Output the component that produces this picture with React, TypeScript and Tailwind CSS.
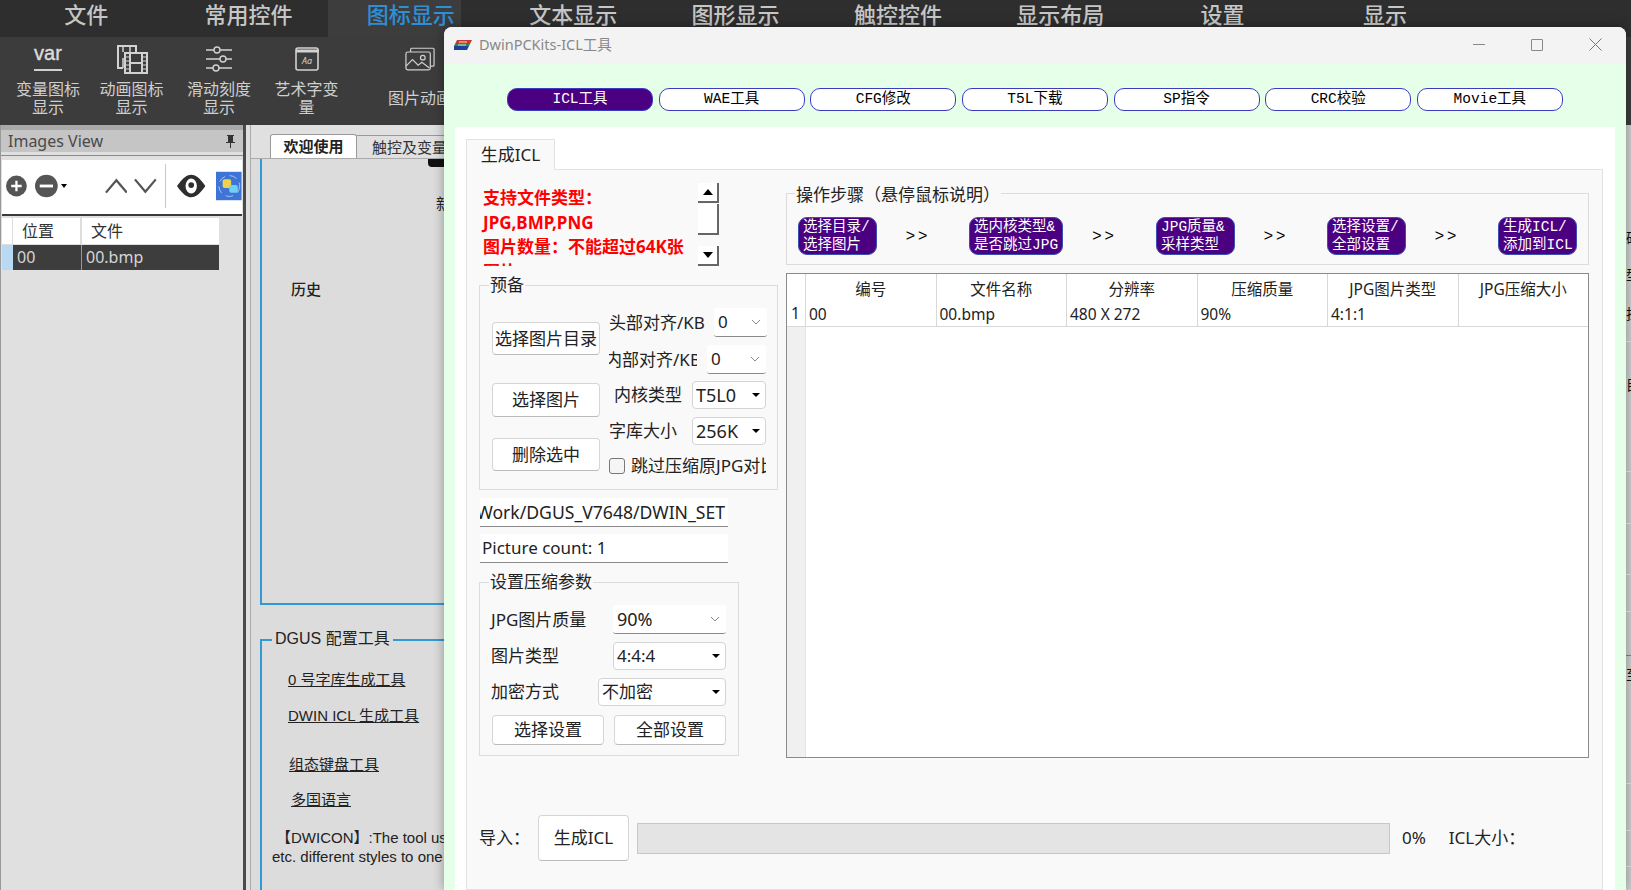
import React from 'react';

const UI = 'font-["Noto_Sans","Noto_Sans_CJK_SC",sans-serif]';
const MONO = 'font-["Liberation_Mono","Noto_Sans_CJK_SC",monospace]';
const ARIAL = 'font-["Liberation_Sans","Noto_Sans_CJK_SC",sans-serif]';

const topTabs = ['文件', '常用控件', '图标显示', '文本显示', '图形显示', '触控控件', '显示布局', '设置', '显示'];
const pills = ['ICL工具', 'WAE工具', 'CFG修改', 'T5L下载', 'SP指令', 'CRC校验', 'Movie工具'];
const columns = ['编号', '文件名称', '分辨率', '压缩质量', 'JPG图片类型', 'JPG压缩大小'];
const cells = ['00', '00.bmp', '480 X 272', '90%', '4:1:1', ''];

// what peeks out to the right of the floating window, y is from the top of the strip
const sideMarks: { y: number; h: number; text?: string; color?: string }[] = [
  { y: 106, h: 14, text: '硬' },
  { y: 143, h: 14, text: '型' },
  { y: 182, h: 14, text: '挂' },
  { y: 216, h: 1, color: '#e8e8e8' },
  { y: 253, h: 14, text: '目' },
  { y: 346, h: 1, color: '#e8e8e8' },
  { y: 398, h: 1, color: '#e8e8e8' },
  { y: 449, h: 1, color: '#e8e8e8' },
  { y: 486, h: 1, color: '#e8e8e8' },
  { y: 530, h: 1, color: '#2f9ad6' },
  { y: 543, h: 14, text: '至' },
  { y: 658, h: 1, color: '#e8e8e8' },
  { y: 705, h: 1, color: '#e8e8e8' },
  { y: 741, h: 1, color: '#e8e8e8' },
];

function VarIcon() {
  return (
    <div className="flex flex-col items-center w-[30px] h-[34px]">
      <span className={`${ARIAL} text-[20px] leading-[22px] font-normal text-[#dcdcdc] [-webkit-text-stroke:0.4px_#dcdcdc]`}>var</span>
      <div className="w-[28px] h-[2px] bg-[#d0d0d0] mt-[5px]" />
    </div>
  );
}

function FilmIcon() {
  return (
    <svg width="32" height="30" viewBox="0 0 32 30" fill="none" stroke="#d2d2d2" strokeWidth="2">
      <path d="M20 8V2H2v22h5" />
      <path d="M7 2v6M7 14v10M14 2v6" strokeWidth="1.5" />
      <rect x="9" y="9" width="22" height="20" />
      <path d="M14 9v20M26 9v20M14 19h12" />
      <path d="M9 13h5M9 17h5M9 21h5M9 25h5M26 13h5M26 17h5M26 21h5M26 25h5" strokeWidth="1.2" />
    </svg>
  );
}

function SlidersIcon() {
  return (
    <svg width="28" height="26" viewBox="0 0 28 26" fill="none" stroke="#d2d2d2" strokeWidth="1.4">
      <path d="M1 4h8M15 4h12M1 13h14M21 13h6M1 22h7M14 22h13" />
      <circle cx="12" cy="4" r="3" />
      <circle cx="18" cy="13" r="3" />
      <circle cx="11" cy="22" r="3" />
    </svg>
  );
}

function ArtIcon() {
  return (
    <svg width="24" height="24" viewBox="0 0 24 24" fill="none">
      <rect x="1" y="1" width="22" height="22" rx="2" stroke="#d2d2d2" strokeWidth="1.6" />
      <path d="M1 4h23" stroke="#d2d2d2" strokeWidth="3" />
      <text x="12" y="17" textAnchor="middle" fontSize="9" fontStyle="italic" fill="#d2d2d2">Aa</text>
    </svg>
  );
}

function ImagesIcon() {
  return (
    <svg width="30" height="25" viewBox="0 0 32 26" fill="none" stroke="#cfcfcf" strokeWidth="1.3">
      <path d="M6 5V2a1 1 0 0 1 1-1h23a1 1 0 0 1 1 1v17a1 1 0 0 1-1 1h-3" />
      <rect x="1" y="5" width="26" height="19" rx="2" />
      <path d="M1 20l7-7 6 6 4-3 8 6" />
      <circle cx="19" cy="11" r="2.5" />
    </svg>
  );
}

function RibbonItem({ icon, lines, w, labelTop }: { icon: React.ReactNode; lines: string[]; w: string; labelTop: string }) {
  return (
    <div className={`${w} shrink-0 flex flex-col items-center`}>
      <div className="h-[30px] flex items-center justify-center">{icon}</div>
      <div className={`${labelTop} text-[16px] leading-[18px] text-[#cfcfcf] text-center whitespace-nowrap`}>
        {lines.map((l) => (
          <div key={l}>{l}</div>
        ))}
      </div>
    </div>
  );
}

function Toolbar() {
  return (
    <div className="mx-[1px] mt-[4px] h-[56px] bg-white flex items-center pl-[4px] pb-[2px] border-b-2 border-[#3a3a3a]">
      <svg width="22" height="24" viewBox="0 0 24 24">
        <circle cx="12" cy="12" r="12" fill="#555" />
        <path d="M12 6v12M6 12h12" stroke="#fff" strokeWidth="2.6" />
      </svg>
      <svg width="24" height="24" viewBox="0 0 24 24" className="ml-[8px]">
        <circle cx="12" cy="12" r="12" fill="#555" />
        <path d="M5 12h14" stroke="#fff" strokeWidth="3" />
      </svg>
      <div className="ml-[3px] w-0 h-0 border-x-[3px] border-x-transparent border-t-[4px] border-t-black" />
      <svg width="24" height="16" viewBox="0 0 24 16" fill="none" stroke="#555" strokeWidth="2.4" className="ml-[38px]">
        <path d="M1 15 12 2l11 13" />
      </svg>
      <svg width="24" height="16" viewBox="0 0 24 16" fill="none" stroke="#555" strokeWidth="2.4" className="ml-[7px]">
        <path d="M1 1l11 13L23 1" />
      </svg>
      <div className="ml-[8px] w-[1px] h-[44px] bg-[#c8c8c8]" />
      <svg width="30" height="24" viewBox="0 0 30 24" className="ml-[11px]">
        <path d="M0 12C6 3 11 0 15 0s9 3 15 12c-6 9-11 12-15 12S6 21 0 12z" fill="#2e2e2e" />
        <ellipse cx="15" cy="12" rx="6" ry="8" fill="#fff" />
        <circle cx="15" cy="11" r="3" fill="#2e2e2e" />
      </svg>
      <svg width="27" height="30" viewBox="0 0 27 30" className="ml-[11px]">
        <rect width="27" height="30" fill="#3d74d6" />
        <circle cx="14" cy="15" r="11" fill="none" stroke="#a9c6f2" strokeWidth="1" strokeDasharray="8 5" />
        <rect x="7" y="8" width="9" height="9" rx="2" fill="#f0d24a" />
        <rect x="14" y="14" width="9" height="8" rx="2" fill="#6fd0f2" />
      </svg>
    </div>
  );
}

function ImagesPanel() {
  return (
    <div className="w-[246px] shrink-0 flex flex-col border-r-[3px] border-l border-l-[#999] border-r-[#4a4a4a] bg-[#e0e0e0]">
      <div className="h-[5px] bg-[#a9a9a9]" />
      <div className="h-[22px] bg-[#c5c5c5] flex items-center justify-between pl-[7px] pr-[8px] text-[16px] text-[#4a4a4a]">
        <span>Images View</span>
        <svg width="9" height="14" viewBox="0 0 9 14" fill="#333">
          <path d="M1 1h7v1H7v6h2v1H5v5H4V9H0V8h2V2H1z" />
        </svg>
      </div>
      <div className="h-[1px] mt-[3px] bg-[#8a8a8a]" />
      <Toolbar />
      <div className="mt-[2px] ml-[1px] mr-[24px] text-[16px]">
        <div className="h-[26px] flex bg-white text-[#333]">
          <div className="w-[11px] border-r border-[#ddd]" />
          <div className="w-[69px] pl-[9px] border-r-2 border-[#ddd] leading-[26px]">位置</div>
          <div className="flex-1 pl-[9px] leading-[26px]">文件</div>
        </div>
        <div className="h-[26px] flex bg-[#3d3d3d] text-[#d6d6d6] border-t border-[#ddd]">
          <div className="w-[11px] bg-[#b9d9f2]" />
          <div className="w-[69px] pl-[4px] border-r border-[#999] leading-[25px]">00</div>
          <div className="flex-1 pl-[4px] leading-[25px]">00.bmp</div>
        </div>
      </div>
    </div>
  );
}

function WelcomePanel() {
  return (
    <div className="flex-1 relative flex flex-col bg-[#dcdcdc] border-l border-[#aaa] ml-[4px] overflow-hidden">
      <div className="h-[34px] shrink-0 flex items-end pl-[19px] border-b border-[#aaa] bg-[#e0e0e0]">
        <div className="w-[87px] h-[24px] bg-white rounded-t-[3px] border-x border-t border-[#999] text-center text-[15px] font-bold leading-[23px] text-[#222]">
          欢迎使用
        </div>
        <div className="w-[120px] h-[23px] pl-[15px] border-t border-[#999] text-[15px] leading-[22px] text-[#333] whitespace-nowrap">
          触控及变量配置
        </div>
      </div>
      <div className="ml-[9px] h-[446px] shrink-0 border-l-2 border-b-2 border-[#2f9ad6] flex flex-col">
        <div className="ml-[166px] w-[30px] h-[8px] bg-[#111] rounded-bl-[4px]" />
        <div className="ml-[174px] mt-[26px] text-[15px] leading-[20px] text-[#222]">新建</div>
        <div className="ml-[29px] mt-[66px] text-[15px] leading-[20px] font-medium text-[#222]">历史</div>
      </div>
      <div className={`${ARIAL} ml-[9px] mt-[34px] h-[251px] shrink-0 border-l-2 border-t-2 border-[#2f9ad6] relative text-[15px] text-[#222]`}>
        <div className="absolute -top-[13px] left-[10px] bg-[#dcdcdc] px-[3px] text-[16px] leading-[22px]">DGUS 配置工具</div>
        <div className="ml-[26px] mt-[29px] leading-[20px] underline">0 号字库生成工具</div>
        <div className="ml-[26px] mt-[16px] leading-[20px] underline">DWIN ICL 生成工具</div>
        <div className="ml-[27px] mt-[29px] leading-[20px] underline">组态键盘工具</div>
        <div className="ml-[29px] mt-[15px] leading-[20px] underline">多国语言</div>
        <div className="ml-[14px] mt-[18px] leading-[19px] whitespace-nowrap">【DWICON】:The tool used to convert</div>
        <div className="ml-[10px] leading-[19px] whitespace-nowrap">etc. different styles to one file format</div>
      </div>
      <div className="absolute inset-y-0 right-[5px] w-[70px] bg-gradient-to-r from-transparent to-black/15" />
    </div>
  );
}

function SideStrip() {
  let prev = 0;
  return (
    <div className="w-[5px] shrink-0 flex flex-col overflow-hidden bg-[#cfcfcf]">
      {sideMarks.map((m) => {
        const top = m.y - prev;
        prev = m.y + m.h;
        return m.text ? (
          <div key={m.y} className="h-[14px] w-[5px] overflow-hidden text-[14px] leading-[14px] text-[#111] whitespace-nowrap" style={{ marginTop: top }}>
            {m.text}
          </div>
        ) : (
          <div key={m.y} className="h-[1px] shrink-0" style={{ marginTop: top, backgroundColor: m.color }} />
        );
      })}
    </div>
  );
}

function Combo({ value, w, mode, big }: { value: string; w: string; mode: 'flat' | 'drop'; big?: boolean }) {
  if (mode === 'flat') {
    return (
      <div className={`${w} h-[29px] shrink-0 bg-white border-b border-[#8a8a8a] rounded-[3px] flex items-center justify-between pl-[4px] pr-[6px]`}>
        <span className={big ? 'text-[18px]' : ''}>{value}</span>
        <svg width="10" height="6" viewBox="0 0 10 6" fill="none" stroke="#888" strokeWidth="1">
          <path d="M1 1l4 4 4-4" />
        </svg>
      </div>
    );
  }
  return (
    <div className={`${w} h-[28px] shrink-0 bg-white border border-[#d4d4d4] rounded-[4px] flex items-center justify-between pl-[3px] pr-[5px]`}>
      <span className={big ? 'text-[18px]' : ''}>{value}</span>
      <div className="w-0 h-0 border-x-[4px] border-x-transparent border-t-[4px] border-t-black" />
    </div>
  );
}

function Btn({ children, className }: { children: React.ReactNode; className: string }) {
  return (
    <div className={`${className} shrink-0 bg-white border border-[#d6d6d6] border-b-[#bbb] rounded-[4px] flex items-center justify-center text-[#222] whitespace-nowrap`}>
      {children}
    </div>
  );
}

function PrepGroup() {
  return (
    <div className="relative mt-[19px] w-[299px] h-[205px] border border-[#dcdcdc] flex pl-[12px] text-[17px] text-[#222]">
      <span className="absolute -top-[13px] left-[9px] px-[1px] bg-[#f9f9f9] leading-[24px]">预备</span>
      <div className="w-[108px] shrink-0 pt-[36px] flex flex-col">
        <Btn className="w-[108px] h-[33px]">选择图片目录</Btn>
        <Btn className="w-[108px] h-[34px] mt-[28px]">选择图片</Btn>
        <Btn className="w-[108px] h-[33px] mt-[21px]">删除选中</Btn>
      </div>
      <div className="w-[157px] ml-[9px] pt-[22px] flex flex-col">
        <div className="h-[29px] flex items-center">
          <span className="w-[105px] shrink-0 whitespace-nowrap">头部对齐/KB</span>
          <Combo value="0" w="w-[53px]" mode="flat" />
        </div>
        <div className="h-[29px] mt-[8px] flex items-center">
          <div className="w-[88px] shrink-0 overflow-hidden flex justify-center">
            <span className="whitespace-nowrap">内部对齐/KB</span>
          </div>
          <div className="w-[10px] shrink-0" />
          <Combo value="0" w="w-[59px]" mode="flat" />
        </div>
        <div className="h-[28px] mt-[7px] flex items-center">
          <span className="w-[83px] pl-[5px] shrink-0 whitespace-nowrap">内核类型</span>
          <Combo value="T5L0" w="w-[74px]" mode="drop" big />
        </div>
        <div className="h-[28px] mt-[8px] flex items-center">
          <span className="w-[83px] shrink-0 whitespace-nowrap">字库大小</span>
          <Combo value="256K" w="w-[74px]" mode="drop" big />
        </div>
        <div className="h-[18px] mt-[12px] flex items-center overflow-hidden">
          <div className="w-[16px] h-[16px] shrink-0 rounded-[3px] border border-[#777] bg-[#f5f5f5]" />
          <span className="ml-[6px] whitespace-nowrap">跳过压缩原JPG对比</span>
        </div>
      </div>
    </div>
  );
}

function CompressGroup() {
  return (
    <div className="relative mt-[19px] w-[260px] h-[174px] border border-[#dcdcdc] pl-[11px] text-[17px] text-[#222]">
      <span className="absolute -top-[13px] left-[9px] px-[1px] bg-[#f9f9f9] leading-[24px]">设置压缩参数</span>
      <div className="mt-[22px] pr-[12px] h-[29px] flex items-center justify-between">
        <span>JPG图片质量</span>
        <Combo value="90%" w="w-[113px]" mode="flat" big />
      </div>
      <div className="mt-[8px] pr-[12px] h-[28px] flex items-center justify-between">
        <span>图片类型</span>
        <Combo value="4:4:4" w="w-[113px]" mode="drop" />
      </div>
      <div className="mt-[8px] pr-[12px] h-[28px] flex items-center justify-between">
        <span>加密方式</span>
        <Combo value="不加密" w="w-[128px]" mode="drop" />
      </div>
      <div className="mt-[9px] flex gap-[10px] pl-[1px]">
        <Btn className="w-[112px] h-[30px]">选择设置</Btn>
        <Btn className="w-[112px] h-[30px]">全部设置</Btn>
      </div>
    </div>
  );
}

function LeftColumn() {
  return (
    <div className="w-[308px] shrink-0 ml-[12px] flex flex-col">
      <div className="h-[83px] w-[240px] flex justify-between">
        <div className="h-[83px] w-[205px] overflow-hidden pl-[4px] pt-[3px] text-[17px] leading-[24.5px] font-bold text-[#ff0000] whitespace-nowrap">
          <div>支持文件类型：</div>
          <div>JPG,BMP,PNG</div>
          <div>图片数量：不能超过64K张</div>
          <div>图片</div>
        </div>
        <div className="w-[21px] flex flex-col justify-between">
          <div>
            <div className="h-[20px] bg-white border-b-2 border-r-2 border-[#666] flex items-center justify-center">
              <div className="w-0 h-0 border-x-[5px] border-x-transparent border-b-[6px] border-b-black" />
            </div>
            <div className="h-[31px] mt-[1px] bg-white border-b-2 border-r-2 border-[#666]" />
          </div>
          <div className="h-[20px] bg-white border-b-2 border-r-2 border-[#666] flex items-center justify-center">
            <div className="w-0 h-0 border-x-[5px] border-x-transparent border-t-[6px] border-t-black" />
          </div>
        </div>
      </div>
      <PrepGroup />
      <div className="mt-[8px] ml-[1px] w-[248px] h-[29px] bg-white border-b border-[#8a8a8a] overflow-hidden flex justify-end items-center pr-[3px] text-[17.6px] text-[#222] whitespace-nowrap">
        C:/Work/DGUS_V7648/DWIN_SET
      </div>
      <div className="mt-[7px] ml-[1px] w-[248px] h-[29px] bg-white border-b border-[#8a8a8a] flex items-center pl-[2px] text-[17px] text-[#222]">
        Picture count: 1
      </div>
      <CompressGroup />
    </div>
  );
}

function StepBtn({ a, b, w }: { a: string; b: string; w: string }) {
  return (
    <div className={`${w} ${MONO} h-[38px] shrink-0 rounded-[9px] bg-[#4b0082] border border-[#3c4fb0] text-white text-[14.5px] leading-[17.5px] pl-[4px] pt-[1px] whitespace-nowrap overflow-hidden`}>
      <div>{a}</div>
      <div>{b}</div>
    </div>
  );
}

function Arrows({ w }: { w: string }) {
  return (
    <div className={`${w} ${ARIAL} shrink-0 h-[38px] flex items-center justify-center pr-[10px] text-[16px] tracking-[3px] text-black`}>
      &gt;&gt;
    </div>
  );
}

function RightColumn() {
  return (
    <div className="w-[803px] shrink-0 flex flex-col ml-[-1px]">
      <div className="relative mt-[10px] h-[72px] border border-[#dcdcdc] flex items-start pt-[23px] pl-[11px]">
        <span className="absolute -top-[11px] left-[8px] px-[1px] bg-[#f9f9f9] text-[17px] leading-[24px] text-[#222]">
          操作步骤（悬停鼠标说明）
        </span>
        <StepBtn a="选择目录/" b="选择图片" w="w-[79px]" />
        <Arrows w="w-[92px]" />
        <StepBtn a="选内核类型&" b="是否跳过JPG" w="w-[94px]" />
        <Arrows w="w-[93px]" />
        <StepBtn a="JPG质量&" b="采样类型" w="w-[79px]" />
        <Arrows w="w-[92px]" />
        <StepBtn a="选择设置/" b="全部设置" w="w-[79px]" />
        <Arrows w="w-[92px]" />
        <StepBtn a="生成ICL/" b="添加到ICL" w="w-[79px]" />
      </div>
      <div className="mt-[8px] h-[485px] border border-[#8a8a8a] bg-white flex flex-col text-[15.5px] text-[#222]">
        <div className="flex border-b border-[#d8d8d8] h-[53px]">
          <div className="w-[19px] shrink-0 pt-[27px] pl-[4px] border-r border-[#d8d8d8] leading-[24px]">1</div>
          {columns.map((c, i) => (
            <div key={c} className="flex-1 border-r border-[#d8d8d8] last:border-r-0">
              <div className="h-[29px] leading-[30px] text-center">{c}</div>
              <div className="h-[23px] leading-[23px] pl-[3px]">{cells[i]}</div>
            </div>
          ))}
        </div>
        <div className="flex-1 w-[19px] bg-[#f0f0f0] border-r border-[#e4e4e4]" />
      </div>
    </div>
  );
}

function IclWindow() {
  return (
    <div className={`${UI} absolute left-[444px] top-[27px] w-[1182px] h-[863px] rounded-t-[8px] overflow-hidden bg-[#e6ffe8] flex flex-col shadow-[0_0_12px_rgba(0,0,0,0.35)]`}>
      <div className="h-[37px] shrink-0 bg-[#f3f3f3] flex items-center pb-[2px]">
        <svg width="18" height="10" viewBox="0 0 18 10" className="ml-[10px]">
          <path d="M3 0h15l-2 4H1z" fill="#c8372d" />
          <path d="M1 4h15l-1 2H0z" fill="#2a8a3c" />
          <path d="M0 6h15l-2 4H0z" fill="#1f3f9e" />
          <path d="M5 2h8M4 5h8" stroke="#fff" strokeWidth="0.8" />
        </svg>
        <span className="ml-[7px] text-[14.5px] text-[#888]">DwinPCKits-ICL工具</span>
        <div className="ml-auto flex items-center">
          <div className="w-[12px] h-[1px] bg-[#888] mr-[46px]" />
          <div className="w-[12px] h-[12px] border border-[#888] rounded-[1px] mr-[46px]" />
          <svg width="13" height="13" viewBox="0 0 13 13" stroke="#777" strokeWidth="1" className="mr-[24px]">
            <path d="M0.5 0.5l12 12M12.5 0.5l-12 12" />
          </svg>
        </div>
      </div>
      <div className="h-[63px] shrink-0 flex items-start pl-[63px] pt-[24px] gap-[5.65px]">
        {pills.map((p, i) => (
          <div
            key={p}
            className={`${MONO} w-[146px] h-[23px] shrink-0 rounded-[10px] border border-[#3c3cc0] text-center text-[14.5px] leading-[21px] ${
              i === 0 ? 'bg-[#4b0082] text-white' : 'bg-white text-black'
            }`}
          >
            {p}
          </div>
        ))}
      </div>
      <div className="flex-1 mx-[11px] bg-white pt-[12px] pl-[11px] pr-[12px] flex flex-col min-h-0">
        <div className="w-[89px] h-[31px] shrink-0 bg-[#f9f9f9] border border-b-0 border-[#e2e2e2] text-[17px] leading-[30px] text-center text-[#222] relative z-10">
          生成ICL
        </div>
        <div className="flex-1 bg-[#f9f9f9] border border-[#e2e2e2] -mt-[1px] pt-[13px] flex flex-col min-h-0">
          <div className="flex h-[575px] shrink-0">
            <LeftColumn />
            <RightColumn />
          </div>
          <div className="mt-[57px] pl-[12px] flex items-center text-[17px] text-[#222]">
            <span className="w-[59px] shrink-0">导入：</span>
            <Btn className="w-[91px] h-[46px]">生成ICL</Btn>
            <div className="ml-[8px] w-[753px] h-[31px] shrink-0 bg-[#e4e4e4] border border-[#c8c8c8]" />
            <span className="ml-[12px]">0%</span>
            <span className="ml-[23px]">ICL大小：</span>
          </div>
        </div>
      </div>
    </div>
  );
}

export default function App() {
  return (
    <div className={`${UI} relative w-full h-[890px] overflow-hidden bg-[#e0e0e0]`}>
      <div className="h-[37px] flex bg-[#2e2e2e] pl-[5px]">
        {topTabs.map((t, i) => (
          <div
            key={i}
            className={`shrink-0 text-center text-[22px] leading-[28px] font-medium ${
              i === 2
                ? 'w-[164.35px] -ml-[2px] pl-[2px] bg-[linear-gradient(to_right,#3d3d3d_133px,transparent_133px)] text-[#2d8fd8]'
                : 'w-[162.35px] text-[#c6c6c6]'
            }`}
          >
            {t}
          </div>
        ))}
      </div>
      <div className="h-[88px] bg-[#3c3c3c] flex items-start pt-[7px] pl-[8px]">
        <RibbonItem icon={<VarIcon />} lines={['变量图标', '显示']} w="w-[80px]" labelTop="mt-[6px]" />
        <RibbonItem icon={<FilmIcon />} lines={['动画图标', '显示']} w="w-[87px]" labelTop="mt-[6px]" />
        <RibbonItem icon={<SlidersIcon />} lines={['滑动刻度', '显示']} w="w-[88px]" labelTop="mt-[6px]" />
        <RibbonItem icon={<ArtIcon />} lines={['艺术字变', '量']} w="w-[87px]" labelTop="mt-[6px]" />
        <RibbonItem icon={<ImagesIcon />} lines={['图片动画']} w="w-[140px]" labelTop="mt-[15px]" />
      </div>
      <div className="flex h-[765px]">
        <ImagesPanel />
        <WelcomePanel />
        <SideStrip />
      </div>
      <IclWindow />
    </div>
  );
}
